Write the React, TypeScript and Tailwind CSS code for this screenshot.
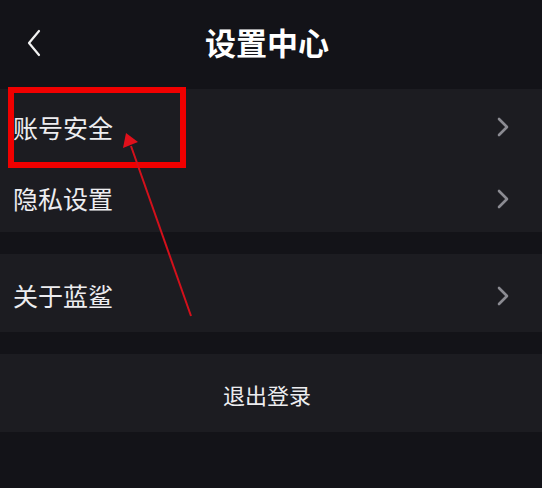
const Chevron = () => (
  <svg width="14" height="20" viewBox="0 0 14 20" fill="none">
    <path d="M3 2 L11 10 L3 18" stroke="#8b8b92" strokeWidth="2.6" strokeLinecap="round" strokeLinejoin="round" />
  </svg>
);

const Row = ({label, h = "h-[72px]"}: { label: string, h?: string }) => (
  <div className={`${h} flex items-center justify-between pl-[13px] pr-[32px] pt-[5px] bg-[#1c1c21]`}>
    <span className="text-[25px] text-[#ededf0] leading-none">{label}</span>
    <Chevron/>
  </div>
);

export default function App() {
  return (
    <div
      className="relative w-full h-[488px] bg-[#131318] overflow-hidden"
      style={{fontFamily: '"Noto Sans CJK SC", "Noto Sans", sans-serif'}}
    >
      <div className="h-[89px] flex items-center pb-[7px]">
        <div className="w-[60px] pl-[26px] flex items-center pt-[3px]">
          <svg width="16" height="28" viewBox="0 0 16 28" fill="none">
            <path d="M13 2 L3 14 L13 26" stroke="#f2f2f2" strokeWidth="2.2" strokeLinecap="round" strokeLinejoin="round" />
          </svg>
        </div>
        <div className="flex-1 text-center text-[31px] font-bold text-white leading-none">设置中心</div>
        <div className="w-[68px]"/>
      </div>

      <div>
        <Row label="账号安全" h="h-[71px]"/>
        <Row label="隐私设置"/>
      </div>

      <div className="mt-[22px]">
        <Row label="关于蓝鲨" h="h-[78px]"/>
      </div>

      <div className="mt-[22px] h-[78px] bg-[#1c1c21] flex items-center justify-center pr-[8px] pt-[1px]">
        <span className="text-[22px] text-[#ededf0] leading-none">退出登录</span>
      </div>

      <div className="absolute left-[8px] top-[87px] w-[178px] h-[81px] border-[6px] border-[#f00000]"/>

      <svg className="absolute left-0 top-0 pointer-events-none" width="542" height="488" viewBox="0 0 542 488">
        <line x1="191" y1="316" x2="131" y2="146" stroke="#d3101b" strokeWidth="2"/>
        <polygon points="126,133 123,148 138,142" fill="#e0101b"/>
      </svg>
    </div>
  );
}
